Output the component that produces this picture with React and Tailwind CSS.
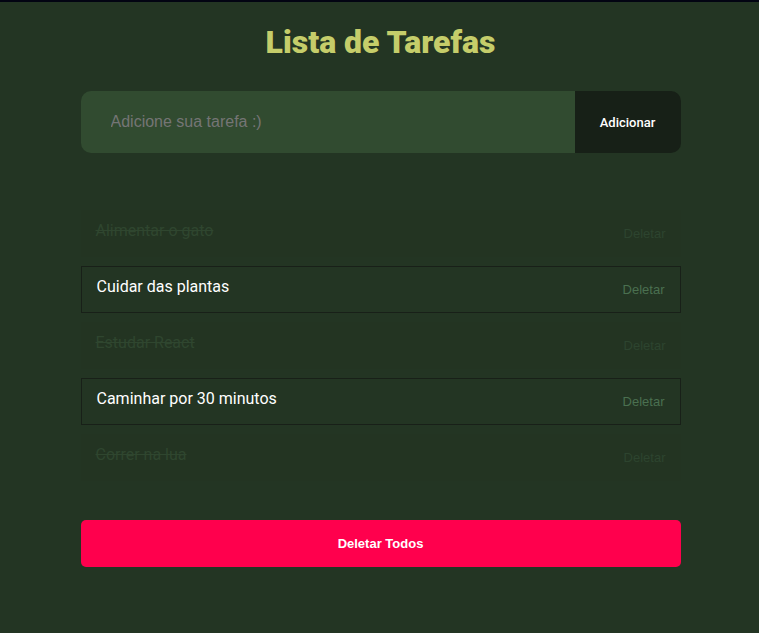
const tasks = [
  { id: 1, name: "Alimentar o gato", done: true },
  { id: 2, name: "Cuidar das plantas", done: false },
  { id: 3, name: "Estudar React", done: true },
  { id: 4, name: "Caminhar por 30 minutos", done: false },
  { id: 5, name: "Correr na lua", done: true },
];

function Task({ task }) {
  return (
    <li
      className={
        task.done
          ? "flex h-[47px] items-start justify-between bg-[#233422] px-[15px] pt-[11px] text-[#2f462f]"
          : "flex h-[47px] items-start justify-between border border-[#182018] px-[15px] pt-[10px] text-white"
      }
    >
      <span className={task.done ? "text-base leading-5 line-through" : "text-base leading-5"}>{task.name}</span>
      <button
        type="button"
        className={
          task.done
            ? "mt-[3px] font-['Liberation_Sans',Arial,sans-serif] text-[13px] leading-5 text-[#2d442f]"
            : "mt-[3px] font-['Liberation_Sans',Arial,sans-serif] text-[13px] leading-5 text-[#4a7050]"
        }
      >
        Deletar
      </button>
    </li>
  );
}

export default function App() {
  return (
    <div className="min-h-screen border-t-2 border-[#020412] bg-[#233523] pr-5 pl-[22px] font-[Roboto,sans-serif]">
      <main className="mx-auto w-full max-w-[600px] pt-5">
        <h1 className="text-center text-[32px] leading-10 font-black text-[#c5cd6a]">Lista de Tarefas</h1>
        <form className="mt-[29px] flex h-[62px] overflow-hidden rounded-[10px]">
          <input
            type="text"
            aria-label="Nova tarefa"
            placeholder="Adicione sua tarefa :)"
            className="min-w-0 flex-1 bg-[#314b30] px-[30px] font-['Liberation_Sans',Arial,sans-serif] text-base text-white outline-none placeholder:text-[#757575]"
          />
          <button type="button" className="w-[106px] bg-[#172017] pt-0.5 text-[13px] font-medium text-white">
            Adicionar
          </button>
        </form>
        <ul className="mt-[57px] flex flex-col gap-[9px]">
          {tasks.map((task) => (
            <Task key={task.id} task={task} />
          ))}
        </ul>
        <button
          type="button"
          className="mt-[39px] h-[47px] w-full rounded-[5px] bg-[#ff004d] font-['Liberation_Sans',Arial,sans-serif] text-[13px] font-bold text-white"
        >
          Deletar Todos
        </button>
      </main>
    </div>
  );
}
